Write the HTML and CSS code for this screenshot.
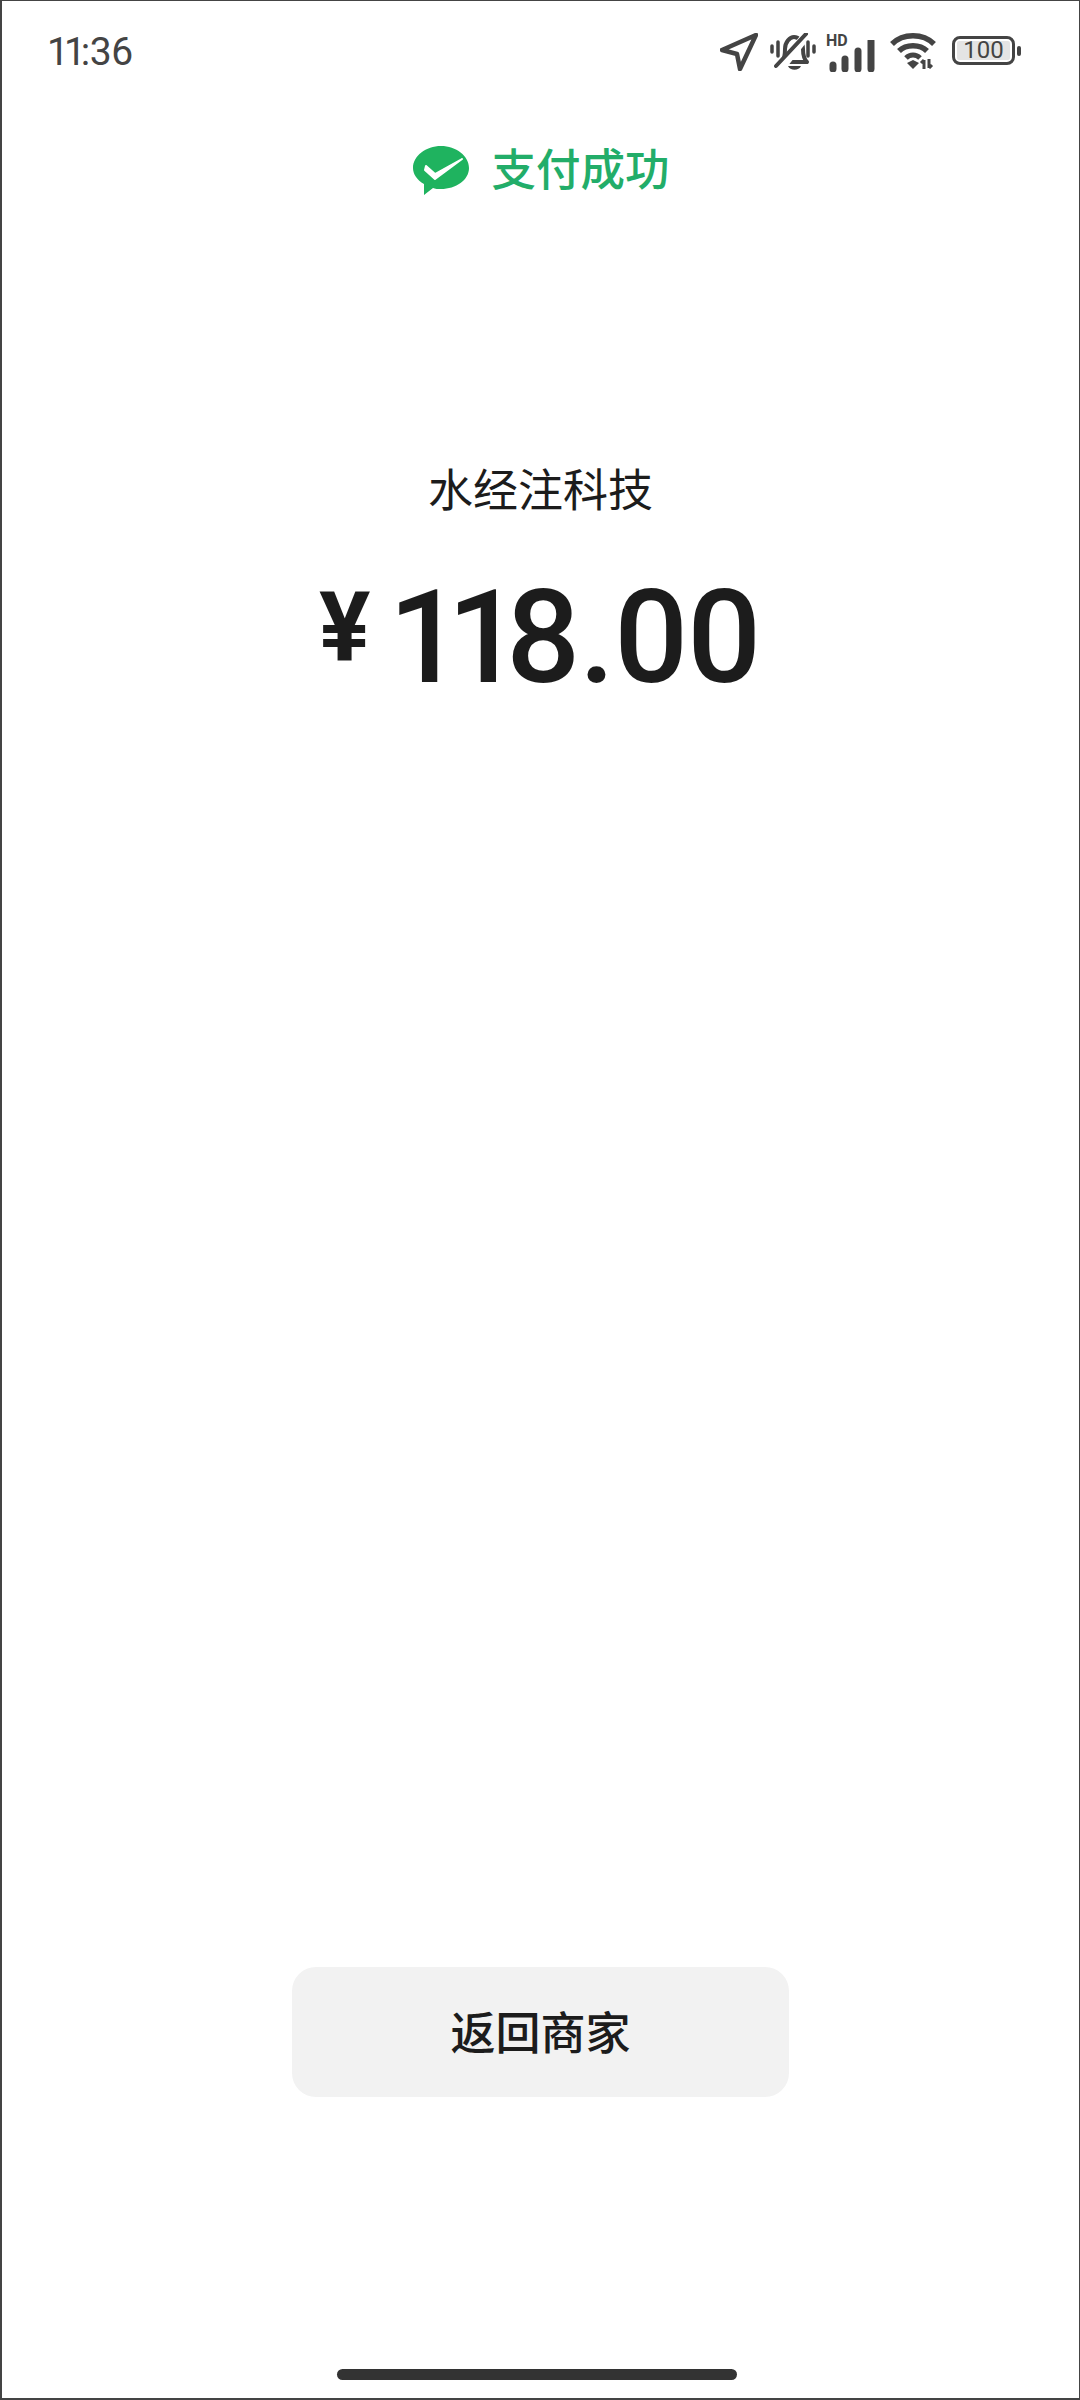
FILE: index.html
```html
<!DOCTYPE html>
<html lang="zh-CN">
<head>
    <meta charset="UTF-8">
    <meta name="viewport" content="width=device-width, initial-scale=1.0">
    <title>支付成功</title>
    <link rel="stylesheet" href="styles.css">
</head>
<body>

<div class="screen">
    <div class="status-bar">
        <span class="time"><span class="time-one">1</span><span class="time-one">1</span>:36</span>
        <div class="status-icons">
            <svg class="icon-arrow" width="38" height="38" viewBox="0 0 38 38">
                <path d="M36 2 L2 17 L17 21 L20 36 Z" fill="none" stroke="#444" stroke-width="4.5" stroke-linejoin="round"/>
            </svg>
            <svg class="icon-bell" width="46" height="38" viewBox="0 0 46 38">
                <path d="M12 29 C15 25 15 20 15 16 C15 9 20 4 24 4 C29 4 33 9 33 16 C33 20 33 25 37 29 Z" fill="none" stroke="#444" stroke-width="4" stroke-linejoin="round"/>
                <path d="M9 37 L38 0" stroke="#fff" stroke-width="9"/>
                <path d="M6 33 L36 1" stroke="#444" stroke-width="4" stroke-linecap="round"/>
                <path d="M2 13 V19 M8 9 V23 M38 9 V23 M44 13 V19" stroke="#444" stroke-width="3.5" stroke-linecap="round"/>
                <path d="M18 33 H31 C29 38 20 38 18 33 Z" fill="#444"/>
            </svg>
            <div class="signal">
                <span class="hd">HD</span>
                <svg width="50" height="32" viewBox="0 0 50 32">
                    <path d="M5 25 V29 M17 19 V29 M30 11 V29 M43 1 V29" stroke="#444" stroke-width="7" stroke-linecap="round"/>
                </svg>
            </div>
            <svg class="icon-wifi" width="46" height="36" viewBox="0 0 46 36">
                <path d="M2 11 C13 0 33 0 44 11" fill="none" stroke="#444" stroke-width="5.5"/>
                <path d="M9 18 C16 11 30 11 37 18" fill="none" stroke="#444" stroke-width="5.5"/>
                <path d="M16 25 C20 21 26 21 30 25" fill="none" stroke="#444" stroke-width="5"/>
                <path d="M17 30 L23 27 L29 30 L23 36 Z" fill="#444"/>
                <path d="M34 27 V36 M39 26 V35 M34 27 L31 30 M39 35 L42 32" stroke="#444" stroke-width="3"/>
            </svg>
            <div class="battery">
                <div class="battery-body"><span class="battery-level">100</span></div>
                <span class="battery-nub"></span>
            </div>
        </div>
    </div>

    <div class="result-title">
        <svg width="56" height="50" viewBox="0 0 56 50">
            <path d="M28 0 C43 0 56 10 56 22 C56 34 43 43 28 43 C25 43 22 43 20 42 L11 49 L11 38 C4 34 0 28 0 22 C0 10 13 0 28 0 Z" fill="#1fb35f"/>
            <path d="M13 20 L22 28 L49 13 L22 33 L12 24 Z" fill="#fff" stroke="#fff" stroke-width="2" stroke-linejoin="round"/>
        </svg>
        <span>支付成功</span>
    </div>

    <div class="merchant">水经注科技</div>

    <div class="amount">
        <span class="currency">¥</span>
        <span class="value"><span class="one">1</span><span class="one">1</span>8.00</span>
    </div>

    <div class="spacer"></div>

    <button class="back-btn">返回商家</button>

    <div class="home-bar"></div>
</div>

</body>
</html>
```

FILE: styles.css
```css
* {
    box-sizing: border-box;
    margin: 0;
    padding: 0;
}

body {
    font-family: Roboto, "Noto Sans CJK SC", sans-serif;
    background: #fff;
    color: #1c1c1c;
}

.screen {
    width: 1080px;
    height: 2400px;
    border: 2px solid #444;
    border-width: 1px 1px 2px 2px;
    display: flex;
    flex-direction: column;
    align-items: center;
}

/* Status bar */
.status-bar {
    width: 100%;
    height: 100px;
    padding: 32px 58px 0 45px;
    display: flex;
    justify-content: space-between;
    align-items: flex-start;
}

.time {
    font-size: 39px;
    line-height: 38px;
    color: #444;
    letter-spacing: -0.5px;
}

.time-one {
    letter-spacing: -5px;
}

.status-icons {
    display: flex;
    align-items: flex-start;
    gap: 12px;
}

.signal {
    position: relative;
    width: 50px;
    height: 36px;
    margin-top: 2px;
}

.signal svg {
    position: absolute;
    left: 0;
    bottom: -1px;
}

.hd {
    position: absolute;
    left: -2px;
    top: -2px;
    font-size: 16px;
    line-height: 16px;
    font-weight: 700;
    color: #444;
}

.battery {
    display: flex;
    align-items: center;
    gap: 2px;
    margin-left: 4px;
    margin-top: 3px;
}

.battery-body {
    width: 63px;
    height: 29px;
    border: 3px solid #444;
    border-radius: 8px;
    padding: 2px;
}

.battery-level {
    display: block;
    height: 100%;
    background: #e4e4e4;
    font-size: 24px;
    line-height: 19px;
    text-align: center;
    color: #444;
    border-radius: 2px;
}

.battery-nub {
    width: 4px;
    height: 10px;
    background: #444;
    border-radius: 2px;
}

/* Result */
.result-title {
    margin-top: 44px;
    margin-left: 2px;
    display: flex;
    align-items: center;
    gap: 22px;
    font-size: 44.5px;
    line-height: 52px;
    font-weight: 500;
    color: #22ad69;
}

.merchant {
    margin-top: 265px;
    font-size: 45px;
    line-height: 60px;
}

.amount {
    margin-top: 51px;
    margin-left: -2px;
    display: flex;
    align-items: flex-start;
    font-weight: 500;
}

.currency {
    font-size: 96px;
    line-height: 96px;
    margin-top: 6px;
    margin-right: 18px;
    font-weight: 700;
}

.value {
    font-size: 130px;
    line-height: 130px;
    letter-spacing: -1px;
}

.one {
    letter-spacing: -15px;
}

.spacer {
    flex: 1;
}

.back-btn {
    width: 497px;
    height: 130px;
    padding-bottom: 4px;
    border: none;
    border-radius: 24px;
    background: #f2f2f2;
    color: #1c1c1c;
    font-family: inherit;
    font-size: 45px;
    font-weight: 500;
}

.home-bar {
    width: 400px;
    height: 11px;
    margin-top: 272px;
    margin-bottom: 18px;
    margin-right: 8px;
    background: #333;
    border-radius: 6px;
}
```
